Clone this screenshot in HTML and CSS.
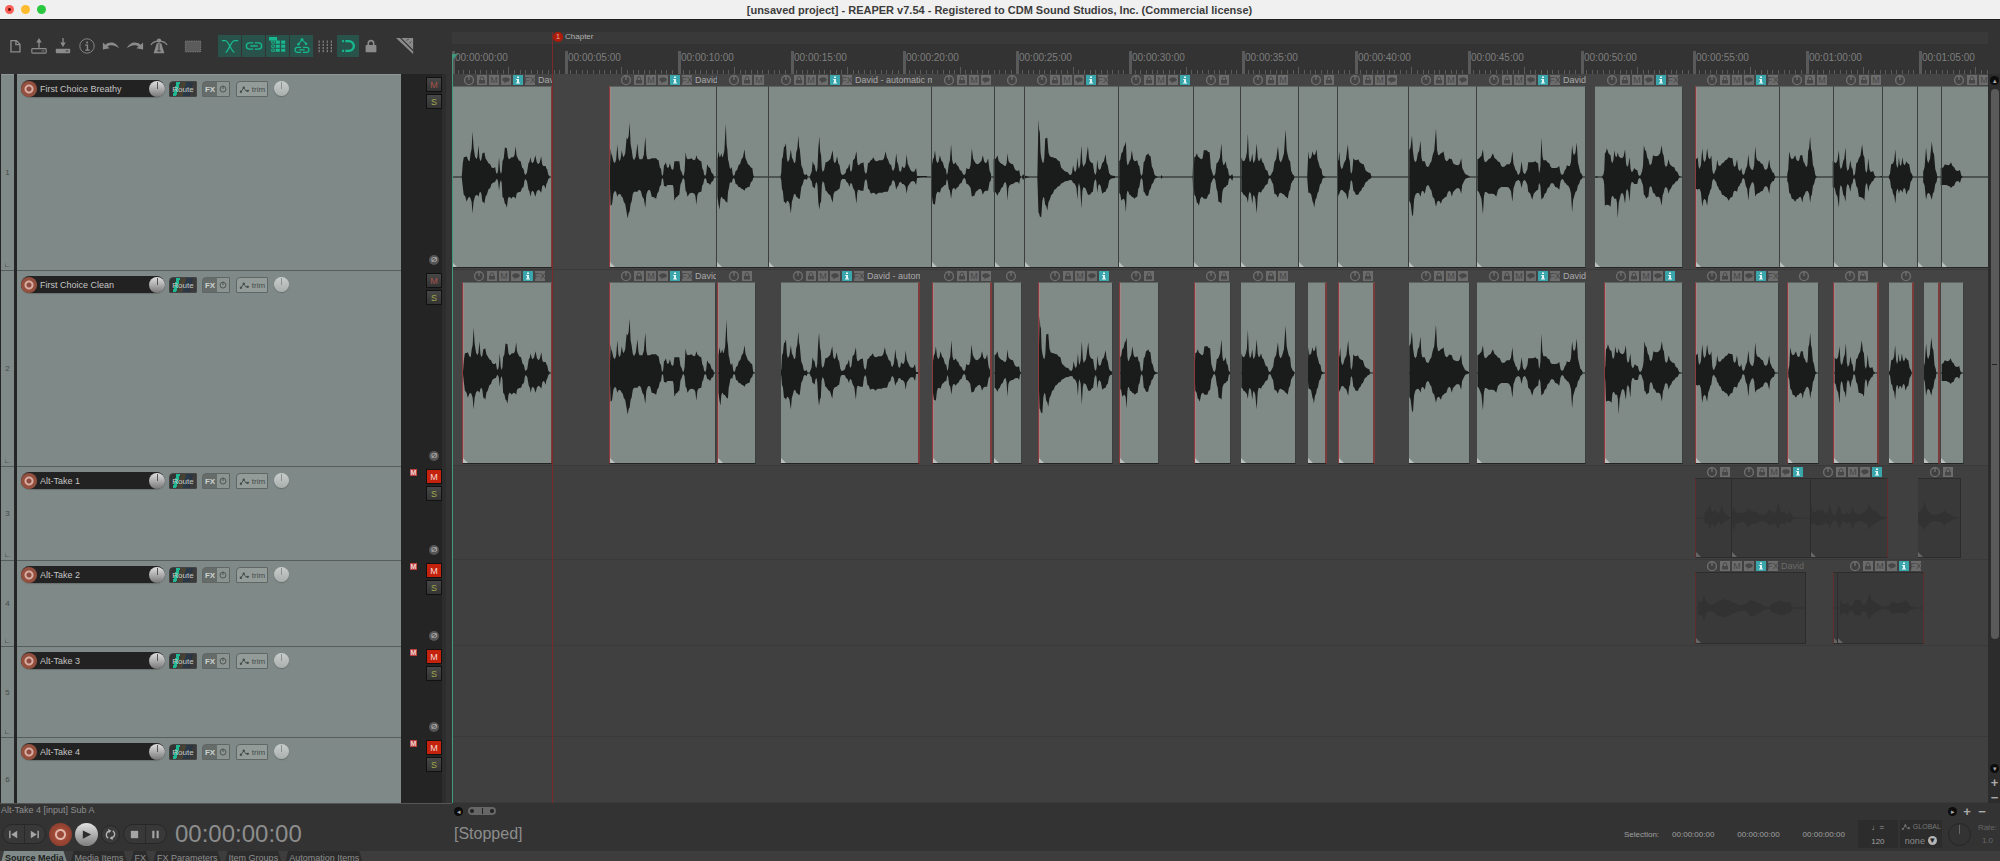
FILE: index.html
```html
<!DOCTYPE html>
<html lang="en">
<head>
  <meta charset="UTF-8" />
  <meta name="viewport" content="width=device-width, initial-scale=1.0" />
  <title>REAPER v7.54</title>
  <link rel="stylesheet" href="styles.css">
</head>
<body>
  <svg class="sprite" aria-hidden="true">
    <symbol id="i-power" viewBox="0 0 12 12"><circle cx="6" cy="6.2" r="4.4" fill="none" stroke="currentColor" stroke-width="1.4"/><path d="M6 1v5" stroke="currentColor" stroke-width="1.4"/></symbol>
    <symbol id="i-lock" viewBox="0 0 10 10"><path d="M2 5h6v3.500h-6z" fill="currentColor"/><path d="M3.300 5V3.500a1.700 1.700 0 0 1 3.400 0V5" fill="none" stroke="currentColor"/></symbol>
    <symbol id="i-note" viewBox="0 0 10 10"><path d="M5 2.200c2.200 0 3.800 1 3.800 2.400S7.200 7 5 7l-1.600 1.500.1-1.700C2 6.400 1.200 5.600 1.200 4.600 1.200 3.200 2.800 2.200 5 2.200z" fill="currentColor"/></symbol>
    <symbol id="i-info" viewBox="0 0 10 10"><path d="M4 1.500h2v1.500H4zM3.200 4H6v3.500h1v1H3v-1h1V5h-.8z" fill="currentColor"/></symbol>
    <symbol id="i-env" viewBox="0 0 12 10"><path d="M2 8l3-5 2.500 3.500L11 6" fill="none" stroke="currentColor"/><circle cx="2" cy="7.500" r="1.300" fill="currentColor"/><circle cx="5.200" cy="3" r="1.300" fill="currentColor"/><circle cx="9.500" cy="6.500" r="1.300" fill="currentColor"/></symbol>
  </svg>

  <div class="app">
    <header class="titlebar">
      <div class="lights">
        <button class="light light-close" aria-label="Close"></button>
        <button class="light light-min" aria-label="Minimize"></button>
        <button class="light light-max" aria-label="Zoom"></button>
      </div>
      <h1>[unsaved project] - REAPER v7.54 - Registered to CDM Sound Studios, Inc. (Commercial license)</h1>
    </header>

    <div class="workspace">
      <section class="left">
        <nav class="toolbar">
          <button aria-label="New project"><svg viewBox="0 0 20 20"><path d="M5.500 4h6l4 4v8.500h-10zM11 4v4.500h4.500" fill="none" stroke="currentColor" stroke-width="1.500"/></svg></button>
          <button aria-label="Open project"><svg viewBox="0 0 20 20"><rect x="2" y="13" width="16" height="5" rx="1" fill="none" stroke="currentColor" stroke-width="1.300"/><path d="M10 12V4" stroke="currentColor" stroke-width="1.500"/><path d="M10 1l3 5h-6z" fill="currentColor"/><path d="M13 15.500h3" stroke="currentColor"/></svg></button>
          <button aria-label="Save project"><svg viewBox="0 0 20 20"><rect x="2" y="13" width="16" height="5" rx="1" fill="currentColor"/><path d="M10 1v6" stroke="currentColor" stroke-width="1.500"/><path d="M10 11l3-5h-6z" fill="currentColor"/><path d="M13 15.500h3" stroke="#333"/></svg></button>
          <button aria-label="Project settings"><svg viewBox="0 0 20 20"><circle cx="10" cy="10" r="8" fill="none" stroke="currentColor"/><path d="M8 9h2.500v5M8 14.500h5" fill="none" stroke="currentColor" stroke-width="1.500"/><circle cx="10.200" cy="6" r="1.100" fill="currentColor"/></svg></button>
          <button aria-label="Undo"><svg viewBox="0 0 20 20"><path d="M1 6v8l7.500-1.500-2.500-2C9 8.500 14 8.500 19 12.500 16 5 8 4.500 3.800 8.500z" fill="currentColor"/></svg></button>
          <button aria-label="Redo"><svg viewBox="0 0 20 20"><path d="M19 6v8l-7.500-1.500 2.500-2C11 8.500 6 8.500 1 12.500 4 5 12 4.500 16.200 8.500z" fill="currentColor"/></svg></button>
          <button aria-label="Metronome"><svg viewBox="0 0 20 20"><path d="M1 9c3-6 15-6 18 0" fill="none" stroke="currentColor" stroke-width="1.300"/><path d="M7.500 7h5l3.500 11H4z" fill="currentColor"/><circle cx="10" cy="4" r="2.400" fill="currentColor"/><path d="M10 8v8M8 15.500h4" stroke="#333"/></svg></button>
          <button class="gap-s" aria-label="Marquee"><svg viewBox="0 0 20 20"><rect x="1.500" y="4.500" width="17" height="12" fill="#5b5b5b" stroke="currentColor" stroke-dasharray="1 1"/></svg></button>
          <div class="toggles">
            <button class="on" aria-label="Auto-crossfade"><svg viewBox="0 0 20 20"><path d="M1 4h4c3 0 7 13 10 13M19 4h-4C11 4 8 17 5 17" fill="none" stroke="currentColor" stroke-width="1.500"/></svg></button>
            <button class="on" aria-label="Item grouping"><svg viewBox="0 0 20 20"><path d="M9 6.500H5a3.500 3.500 0 0 0 0 7h4M11 6.500h4a3.500 3.500 0 0 1 0 7h-4M6 10h8" fill="none" stroke="currentColor" stroke-width="1.500"/></svg></button>
            <button class="on" aria-label="Ripple editing"><svg viewBox="0 0 20 20"><path d="M0 0h9v4h-9z" fill="currentColor"/><path d="M3 4.500h3v2.500H3zM3 9h3v2.500H3zM3 13.500h3V16H3z" fill="none" stroke="currentColor"/><path d="M7.500 4h4.500v3.500H7.500zM13.500 4H18v3.500h-4.500zM7.500 8.500h4.500V12H7.500zM13.500 8.500H18V12h-4.500zM7.500 13h4.500v3.500H7.500zM13.500 13H18v3.500h-4.500z" fill="currentColor"/></svg></button>
            <button class="on" aria-label="Move envelope points"><svg viewBox="0 0 20 20"><path d="M6 8l4-5 4 4" fill="none" stroke="currentColor" stroke-width="1.200"/><circle cx="6" cy="8" r="1.400" fill="currentColor"/><circle cx="10" cy="3" r="1.600" fill="currentColor"/><circle cx="14.500" cy="7.500" r="1.400" fill="currentColor"/><path d="M9 11.500H5a2.500 2.500 0 0 0 0 5.500h4M11 11.500h4a2.500 2.500 0 0 1 0 5.500h-4M7 14.200h6" fill="none" stroke="currentColor" stroke-width="1.400"/></svg></button>
          </div>
          <button aria-label="Grid lines"><svg viewBox="0 0 20 20"><path d="M3.500 4v13M8 4v13M12.500 4v13M17 4v13" stroke="currentColor" stroke-dasharray="2.500 1" stroke-width="1.200"/></svg></button>
          <button class="on" aria-label="Snapping"><svg viewBox="0 0 20 20"><path d="M7 4.500h4a5.500 5.500 0 0 1 0 11H7" fill="none" stroke="currentColor" stroke-width="2.600"/><path d="M3.500 4.500h2M3.500 15.500h2" stroke="currentColor" stroke-width="2.600"/></svg></button>
          <button aria-label="Locking"><svg viewBox="0 0 20 20"><rect x="4" y="9" width="12" height="8" rx="1" fill="currentColor"/><path d="M7 9V7a3 3 0 0 1 6 0v2" fill="none" stroke="currentColor" stroke-width="1.800"/></svg></button>
          <button class="gap-s" aria-label="Scale"><svg viewBox="0 0 20 20"><path d="M0 1h19v18z" fill="currentColor"/><path d="M5 1l14 14" stroke="#333" stroke-width="1.200"/><path d="M12 4l2-2M15 7l2-2" stroke="#333"/></svg></button>
        </nav>
        <div class="tracks" id="tracks"></div>
      </section>

      <section class="arrange">
        <div class="ruler">
          <div class="marker-lane"></div>
          <div class="times" id="times"></div>
        </div>
        <div class="lanes" id="lanes"></div>
        <div class="marker"><b>1</b><span>Chapter</span></div>
        <div class="cursor"></div>
      </section>

      <aside class="vscroll">
        <button class="dot" aria-label="Scroll up">▴</button>
        <div class="vtrack"><div class="vthumb"></div></div>
        <button class="dot" aria-label="Scroll down">▾</button>
        <button class="zoom" aria-label="Zoom in vertically">+</button>
        <button class="zoom" aria-label="Zoom out vertically">−</button>
      </aside>
    </div>

    <div class="statusrow">
      <span class="status">Alt-Take 4 [input] Sub A</span>
      <div class="hscroll">
        <button class="dot" aria-label="Scroll left">◂</button>
        <div class="hthumb"><i></i><s></s><i></i></div>
        <button class="dot push" aria-label="Scroll right">▸</button>
        <button class="zoom" aria-label="Zoom in">+</button>
        <button class="zoom" aria-label="Zoom out">−</button>
      </div>
    </div>

    <footer class="transport">
      <div class="controls">
        <div class="pill">
          <button aria-label="Go to start"><svg viewBox="0 0 12 12"><path d="M2 2v8" stroke="currentColor" stroke-width="1.600"/><path d="M10 2v8L3.500 6z" fill="currentColor"/></svg></button>
          <button aria-label="Go to end"><svg viewBox="0 0 12 12"><path d="M10 2v8" stroke="currentColor" stroke-width="1.600"/><path d="M2 2v8l6.500-4z" fill="currentColor"/></svg></button>
        </div>
        <button class="round rec" aria-label="Record"></button>
        <button class="round play" aria-label="Play"><svg viewBox="0 0 12 12"><path d="M2 1.500v9L11 6z" fill="currentColor"/></svg></button>
        <button class="round loop" aria-label="Repeat"><svg viewBox="0 0 12 12"><path d="M3.500 10A4.300 4.300 0 0 1 4.500 2.200M8.500 2a4.300 4.300 0 0 1-1 7.800" fill="none" stroke="currentColor" stroke-width="1.500"/><path d="M3.500 0l3.500 2-3 2.500zM8.500 12L5 10l3-2.500z" fill="currentColor"/></svg></button>
        <div class="pill">
          <button aria-label="Stop"><svg viewBox="0 0 12 12"><path d="M2 2h8v8H2z" fill="currentColor"/></svg></button>
          <button aria-label="Pause"><svg viewBox="0 0 12 12"><path d="M2.500 2h2.300v8H2.500zM7.200 2h2.300v8H7.200z" fill="currentColor"/></svg></button>
        </div>
        <span class="clock">00:00:00:00</span>
      </div>
      <span class="state">[Stopped]</span>
      <div class="selection">
        <span>Selection:</span><span>00:00:00:00</span><span>00:00:00:00</span><span>00:00:00:00</span>
      </div>
      <div class="box tempo"><span>♩=</span><span>120</span></div>
      <div class="box global">
        <span class="glabel"><svg viewBox="0 0 12 10"><use href="#i-env"/></svg>GLOBAL</span>
        <button>none <i>▾</i></button>
      </div>
      <div class="rateknob"></div>
      <div class="rate"><span>Rate:</span><span>1.0</span></div>
    </footer>

    <nav class="tabs">
      <a href="#" class="tab active">Source Media</a>
      <a href="#" class="tab">Media Items</a>
      <a href="#" class="tab">FX</a>
      <a href="#" class="tab">FX Parameters</a>
      <a href="#" class="tab">Item Groups</a>
      <a href="#" class="tab">Automation Items</a>
    </nav>
  </div>
  <script src="script.js"></script>
</body>
</html>
```
FILE: styles.css
```css
:root {
  --bg: #333333;
  --panel: #7f8987;
  --item: #808b88;
  --wave: #1a1c1b;
  --teal: #3aa5aa;
  --green: #18b78f;
  --icon: #8b8b8b;
  --left: 446px;
  --split: 6px;
}

* {
  box-sizing: border-box;
}

body {
  margin: 0;
  background: var(--bg);
  color: #a0a0a0;
  font-family: "Liberation Sans", Arial, sans-serif;
  font-size: 9px;
}

button {
  padding: 0;
  border: 0;
  background: none;
  color: inherit;
  font: inherit;
}

.sprite {
  display: none;
}

.app {
  display: flex;
  flex-direction: column;
  height: 100vh;
  overflow: hidden;
}

/* title bar */
.titlebar {
  display: flex;
  flex: 0 0 20px;
  align-items: center;
  background: #f0f0f0;
  border-bottom: 1px solid #1c1c1c;
  padding: 0 5px;
}

.titlebar h1 {
  flex: 1;
  margin: 0;
  padding-right: 42px;
  color: #3c3c3c;
  font-size: 11px;
  font-weight: bold;
  line-height: 16px;
  text-align: center;
}

.lights {
  display: flex;
  gap: 7px;
}

.light {
  width: 9px;
  height: 9px;
  border-radius: 50%;
}

.light-close {
  background: radial-gradient(circle, #6d0d0a 1px, #fb5f57 2px);
}

.light-min {
  background: #fdbc2e;
}

.light-max {
  background: #2ac840;
}

/* workspace */
.workspace {
  display: flex;
  flex: 1;
  min-height: 0;
}

.left {
  display: flex;
  flex: 0 0 var(--left);
  flex-direction: column;
  margin-right: var(--split);
}

.toolbar {
  display: flex;
  flex: 0 0 54px;
  align-items: center;
  padding: 0 3px 2px;
  color: var(--icon);
}

.toolbar button {
  display: flex;
  align-items: center;
  justify-content: center;
  width: 24px;
  height: 22px;
}

.toolbar svg {
  width: 18px;
  height: 18px;
}

.toolbar .on {
  width: 22px;
  background: #29534a;
  color: var(--green);
}

.toolbar .gap-s {
  margin-left: 10px;
}

.toggles {
  display: flex;
  gap: 1px;
  margin-left: 13px;
}

.toggles .on {
  width: 23px;
}

/* track control panel */
.tracks {
  display: flex;
  flex: 1;
  flex-direction: column;
  min-height: 0;
  overflow: hidden;
}

.track {
  display: flex;
  flex: none;
  background: #242424;
}

.track:last-child,
.lane:last-child {
  flex: 1;
}

/* the last row runs on below the fold */
.track:last-child {
  min-height: 84px;
}

.strip {
  position: relative;
  display: flex;
  align-items: center;
  justify-content: center;
  width: 13px;
  margin-left: 1px;
  background: var(--panel);
  border-top: 1px solid #565d5b;
  color: #464c4a;
  font-size: 8px;
}

.strip::after {
  content: "";
  position: absolute;
  bottom: 3px;
  left: 4px;
  border: solid transparent;
  border-width: 4px 5px 0 0;
  border-left: 1px solid #5f6664;
  border-bottom: 1px solid #5f6664;
}

.panel {
  display: flex;
  flex: 1;
  align-items: flex-start;
  padding: 5px 4px 0;
  margin-left: 3px;
  background: var(--panel);
  border-top: 1px solid #565d5b;
}

.track:first-child .strip,
.track:first-child .panel {
  border-top-color: #8e9795;
}

.namebox {
  display: flex;
  align-items: center;
  width: 144px;
  height: 17px;
  border-radius: 9px;
  background: #222;
  color: #c4c4c4;
  font-size: 9px;
  box-shadow: 0 1px 1px #6a7270;
}

.namebox input {
  flex: 1;
  min-width: 0;
  height: 15px;
  padding: 0 3px;
  border: 0;
  background: none;
  color: inherit;
  font: inherit;
}

.arm {
  width: 16px;
  height: 16px;
  border-radius: 50%;
  background: radial-gradient(circle, #8d4a3e 2px, #d9aca2 3px, #d9aca2 4px, #94503f 5px);
}

.knob {
  width: 16px;
  height: 16px;
  border-radius: 50%;
  background: linear-gradient(#555, #555) 50% 1px / 1px 7px no-repeat, linear-gradient(#e0e0e0, #777);
}

.knob.pan {
  width: 15px;
  height: 15px;
  margin-top: 1px;
  margin-left: 6px;
  background: linear-gradient(#8b918f, #8b918f) 50% 1px / 1px 7px no-repeat, linear-gradient(#c9cecc, #a9afad);
  box-shadow: 0 1px 1px #666d6b;
}

.chip {
  display: flex;
  align-items: center;
  justify-content: center;
  height: 16px;
  margin-top: 1px;
  border: 1px solid #5f6664;
  border-radius: 4px 1px 1px 1px;
  font-size: 8px;
}

.route {
  width: 28px;
  margin-left: 4px;
  border-color: #444;
  background: linear-gradient(105deg, #333 22%, #20b894 22%, #20b894 34%, #3e3e36 34%, #4d4330 52%, #27394a 56%, #2c3540 78%, #3a3a3a 78%);
  color: #c5cac8;
}

.fx {
  width: 28px;
  margin-left: 5px;
  background: linear-gradient(90deg, #656c6a 54%, #8c9492 54%);
  color: #ced3d1;
  font-weight: bold;
  justify-content: space-around;
}

.fx svg {
  width: 8px;
  height: 8px;
  color: #4c5250;
}

.trim {
  width: 32px;
  margin-left: 6px;
  gap: 2px;
  background: #949c9a;
  color: #454c4a;
}

.trim svg {
  width: 11px;
  height: 9px;
}

.side {
  position: relative;
  display: flex;
  flex: 0 0 45px;
  flex-direction: column;
  align-items: center;
  gap: 2px;
  padding: 3px 0 5px 25px;
  border-right: 4px solid #2d2d2d;
}

.ms {
  flex: none;
  width: 16px;
  height: 15px;
  border: 1px solid #111;
  background: linear-gradient(#474747, #333);
  color: #a9524a;
  font-size: 9px;
}

.ms.solo {
  color: #a1a84a;
}

.ms.muted {
  background: #c4220c;
  color: #f5d7d2;
}

.phase {
  width: 10px;
  height: 10px;
  margin-top: auto;
  border-radius: 50%;
  background: #555;
  color: #bbb;
  font-size: 8px;
  line-height: 10px;
}

.badge {
  position: absolute;
  top: 3px;
  left: 9px;
  width: 7px;
  height: 7px;
  background: #b9403c;
  color: #f0d4d2;
  font-size: 7px;
  font-weight: bold;
  line-height: 7px;
  text-align: center;
}

.track:last-child .phase {
  display: none;
}

/* arrange view */
.arrange {
  position: relative;
  display: flex;
  flex: 1;
  flex-direction: column;
  min-width: 0;
  overflow: hidden;
}

.ruler {
  display: flex;
  flex: 0 0 54px;
  flex-direction: column;
  padding-top: 12px;
}

.marker-lane {
  height: 12px;
  background: #393939;
}

.times {
  position: relative;
  flex: 1;
  overflow: hidden;
}

.tick {
  position: absolute;
  bottom: 0;
  width: 1px;
  height: 4px;
  background: #5a5a5a;
}

.tick.mid {
  height: 7px;
}

.tick.major {
  height: 23px;
  padding-left: 3px;
  color: #7e7e7e;
  font-size: 10px;
  line-height: 13px;
}

.lanes {
  display: flex;
  flex: 1;
  flex-direction: column;
  min-height: 0;
}

.lane {
  position: relative;
  flex: none;
  overflow: hidden;
  background: #404040;
  border-bottom: 1px solid #3a3a3a;
}

.lane.lit {
  background: #444;
}

.item {
  position: absolute;
  top: 0;
  bottom: 1px;
  display: flex;
  flex-direction: column;
}

.item-head {
  display: flex;
  flex: 0 0 12px;
  align-items: center;
  gap: 2px;
  padding-left: 11px;
  overflow: hidden;
  color: #aaa;
  white-space: nowrap;
}

.item-head span {
  margin-left: 1px;
}

.ic {
  display: flex;
  flex: none;
  align-items: center;
  justify-content: center;
  width: 10px;
  height: 10px;
  background: #6c6c6c;
  color: #474747;
  font-size: 9px;
  font-style: normal;
}

.ic svg {
  width: 10px;
  height: 10px;
}

.ic.power {
  width: 12px;
  background: none;
  color: #6e6e6e;
}

.ic.power svg {
  width: 12px;
  height: 12px;
}

.ic.info {
  background: var(--teal);
  color: #e4f5f5;
}

.item-body {
  position: relative;
  flex: 1;
  min-height: 0;
  overflow: hidden;
  background: var(--item);
  border-top: 1px solid #5d6462;
  border-right: 1px solid #3b403f;
  border-bottom: 1px solid #242424;
}

.item-body svg {
  display: block;
  width: 100%;
  height: 100%;
}

.item-body path {
  fill: var(--wave);
}

.item-body::after {
  content: "";
  position: absolute;
  bottom: 0;
  left: 0;
  border: solid transparent;
  border-width: 5px 5px 0 0;
  border-left: 5px solid #b9c0be;
  border-right: 0;
  border-bottom: 0;
}

.fade-in .item-body {
  border-left: 1px solid #8c3a3c;
  box-shadow: inset 1px 0 #a48585;
}

.fade-out .item-body {
  border-right: 2px solid #7c3c3c;
}

.dim .item-body {
  background: #393939;
  border-color: #2c2c2c;
  box-shadow: none;
}

.dim.fade-in .item-body {
  border-left-color: #5e2d2d;
}

.dim.fade-out .item-body {
  border-right: 1px solid #5e2d2d;
}

.dim .item-body path {
  fill: #323232;
}

.dim .item-body::after {
  border-left-color: #666;
}

.dim .item-head {
  color: #6a6a6a;
}

.marker {
  position: absolute;
  top: 12px;
  bottom: 0;
  left: 100px;
  border-left: 1px solid #7b2a28;
  color: #b0b0b0;
  font-size: 8px;
  line-height: 10px;
}

.marker b {
  display: inline-block;
  width: 10px;
  height: 10px;
  border-radius: 50%;
  margin-right: 2px;
  background: #b01a08;
  color: #e5aaa2;
  font-weight: normal;
  text-align: center;
}

.cursor {
  position: absolute;
  top: 34px;
  bottom: 0;
  left: 0;
  border-left: 1px solid #3f9a7f;
}

.cursor::before {
  content: "";
  display: block;
  border-top: 5px solid #3f9a7f;
  border-right: 5px solid transparent;
}

/* scroll bars */
.vscroll {
  display: flex;
  flex: 0 0 12px;
  flex-direction: column;
  align-items: center;
  gap: 4px;
  padding: 56px 0 0 1px;
  background: linear-gradient(var(--bg) 54px, #2c2c2c 54px);
}

.vtrack {
  flex: 1;
  width: 8px;
}

.vthumb {
  height: 82%;
  border-radius: 4px;
  background: linear-gradient(#222, #222) 50% 50% / 5px 1px no-repeat, #5a5a5a;
}

.dot {
  width: 9px;
  height: 9px;
  border-radius: 50%;
  background: #0c0c0c;
  color: #aaa;
  font-size: 7px;
  line-height: 9px;
}

.zoom {
  width: 10px;
  height: 11px;
  color: #aaa;
  font-size: 13px;
  font-weight: bold;
  line-height: 11px;
}

.statusrow {
  display: flex;
  flex: 0 0 17px;
}

.status {
  width: calc(var(--left) + var(--split));
  padding-left: 1px;
  border-top: 1px solid #555;
  color: #8f8f8f;
  line-height: 13px;
}

.hscroll {
  display: flex;
  flex: 1;
  align-items: center;
  gap: 5px;
  padding: 0 13px 1px 2px;
}

.hthumb {
  display: flex;
  align-items: center;
  justify-content: space-between;
  width: 28px;
  height: 8px;
  padding: 0 2px;
  border-radius: 4px;
  background: #666;
}

.hthumb i {
  width: 4px;
  height: 4px;
  border-radius: 50%;
  background: #222;
}

.hthumb s {
  width: 1px;
  height: 6px;
  background: #222;
}

.push {
  margin-left: auto;
}

/* transport */
.transport {
  display: flex;
  flex: 0 0 31px;
  align-items: center;
  min-height: 0;
  padding: 0 3px 3px 0;
  font-size: 8px;
}

.controls {
  display: flex;
  flex: 0 0 calc(var(--left) + var(--split));
  align-items: center;
  gap: 3px;
  padding-left: 2px;
}

.pill {
  display: flex;
  width: 44px;
  height: 20px;
  border: 1px solid #272727;
  border-radius: 10px;
  background: #383838;
}

.pill button {
  flex: 1;
  color: #a5a5a5;
}

.pill button + button {
  border-left: 1px solid #2a2a2a;
}

.pill svg,
.round svg {
  width: 11px;
  height: 11px;
  vertical-align: middle;
}

.round {
  width: 23px;
  height: 23px;
  border-radius: 50%;
}

.rec {
  background: radial-gradient(circle, #9b4a3a 3px, #e0b5a8 4px, #e0b5a8 5px, #a24a38 6px, #7c3527);
}

.play {
  background: linear-gradient(#e2e2e2, #7d7d7d);
  color: #2c2c2c;
}

.loop {
  width: 19px;
  height: 19px;
  border: 1px solid #272727;
  background: #3a3a3a;
  color: #b5b5b5;
}

.clock {
  margin-left: 5px;
  color: #8d8d8d;
  font-size: 24px;
  line-height: 26px;
}

.state {
  flex: 1;
  padding-left: 2px;
  color: #8d8d8d;
  font-size: 16px;
}

.selection {
  display: flex;
  gap: 23px;
  margin-right: 13px;
}

.selection span:first-child {
  margin-right: -10px;
}

.box {
  display: flex;
  flex-direction: column;
  align-items: center;
  justify-content: space-around;
  width: 40px;
  height: 28px;
  background: #2c2c2c;
}

.global {
  width: 42px;
  margin-left: 2px;
}

.glabel {
  display: flex;
  align-items: center;
  gap: 2px;
  color: #777;
  font-size: 7px;
}

.glabel svg {
  width: 10px;
  height: 8px;
}

.global button {
  display: flex;
  align-items: center;
  gap: 3px;
  color: #8a8a8a;
  font-size: 9px;
}

.global i {
  width: 9px;
  height: 9px;
  border-radius: 50%;
  background: #b5b5b5;
  color: #222;
  font-style: normal;
  line-height: 9px;
}

.rateknob {
  width: 23px;
  height: 23px;
  margin: 0 7px 0 6px;
  border: 1px solid #262626;
  border-radius: 50%;
  background: linear-gradient(#666, #666) 50% 1px / 1px 9px no-repeat;
}

.rate {
  display: flex;
  flex-direction: column;
  align-items: center;
  gap: 4px;
  color: #666;
}

/* docker tabs */
.tabs {
  display: flex;
  flex: 0 0 10px;
  align-items: flex-start;
  gap: 1px;
  overflow: hidden;
  background: #3d3d3d;
}

.tab {
  flex: none;
  height: 16px;
  padding: 1px 5px 0;
  background: #2c2c2c;
  clip-path: polygon(4px 0, calc(100% - 5px) 0, 100% 100%, 0 100%);
  color: #8e8e8e;
  line-height: 13px;
  text-decoration: none;
}

.tab.active {
  background: #7f8987;
  color: #1d1f1e;
  font-weight: bold;
}
```
FILE: script.js
```js
const ORIGIN = 452; // timeline zero, items below are stored in window pixels
const SECOND = 22.57; // pixels per second at this zoom

// start, end, number of header icons, fades (l, r), label
const tracks = [
  { name: 'First Choice Breathy', height: 196, lit: true, items: [
    [452, 553, 6, 'r', 'David'], [609, 717, 6, 'l', 'David'], [717, 769, 3], [769, 932, 6, '', 'David - automatic m'],
    [932, 995, 4], [995, 1025, 1], [1025, 1119, 6], [1119, 1194, 5], [1194, 1241, 2], [1241, 1299, 3],
    [1299, 1338, 2], [1338, 1409, 4], [1409, 1477, 4], [1477, 1586, 6, '', 'David'], [1595, 1683, 6],
    [1695, 1780, 6, 'l'], [1780, 1834, 3], [1834, 1883, 3], [1883, 1918, 1], [1918, 1942, 0], [1942, 2400, 3]
  ] },
  { name: 'First Choice Clean', height: 196, lit: true, items: [
    [462, 553, 6, 'lr'], [609, 716, 6, 'l', 'David'], [717, 756, 2, 'l'], [781, 920, 6, 'r', 'David - automatic'],
    [932, 992, 4, 'lr'], [994, 1022, 1], [1038, 1113, 5, 'l'], [1119, 1159, 2, 'l'], [1194, 1231, 2, 'l'],
    [1241, 1296, 3], [1308, 1327, 0, 'r'], [1338, 1375, 2, 'lr'], [1409, 1470, 4], [1477, 1586, 6, '', 'David'],
    [1604, 1683, 5, 'l'], [1695, 1779, 6, 'l'], [1787, 1819, 1, 'l'], [1833, 1879, 2, 'lr'], [1889, 1914, 1, 'r'],
    [1924, 1940, 0, 'r'], [1941, 1964, 0]
  ] },
  { name: 'Alt-Take 1', height: 94, muted: true, items: [
    [1695, 1732, 2, 'l'], [1732, 1811, 5], [1811, 1888, 5, 'r'], [1918, 1961, 2]
  ] },
  { name: 'Alt-Take 2', height: 86, muted: true, items: [
    [1695, 1806, 6, 'l', 'David'], [1833, 1838, 0, 'l'], [1838, 1924, 6, 'r']
  ] },
  { name: 'Alt-Take 3', height: 91, muted: true, items: [] },
  { name: 'Alt-Take 4', height: 66, muted: true, items: [] }
];

// phrases of the take: "x,peak,trough" triples, x counted from timeline zero
const voice = [
  '10,1,1 11,14,10 12,20,18 15,21,25 18,16,20 19,24,22 21,46,37 22,30,25 25,18,18 27,32,20 29,16,15 31,24,25 33,25,27 35.5,17,18 39,13,11 41.5,9,6 44,10,5 46,3,2 48,20,14 50,3,3 51.5,16,20 54,30,27 56,29,31 58,18,20 60.5,20,22 62.6,20,20 65,31,22 66.6,20,16 70,16,15 73,8,10 75,2,2 78,14,13 80,20,20 82,14,14 85,22,20 88,13,13 91,21,16 93,11,8 95.5,11,12 97,8,6 99.5,1,1',
  '157,10,10 157.6,29,29 159,22,28 162,14,14 164.5,33,20 166.5,16,17 169,27,20 171,20,25 174,40,36 175,38,42 177,55,35 179,28,25 181.5,17,15 185,34,15 187,18,13 190,18,20 193,41,31 195,18,15 197,18,13 199.5,19,20 204,19,22 206.5,17,15 209,8,8 210.5,1,1 212,12,9 214,15,10 216,9,8 218,14,8 221,7,8 222.6,16,24 225.5,16,20 227.6,16,18 230,5,5 232,1,1 234,25,14 236,18,20 240,19,16 243,17,17 245,22,28 247,18,16 250,16,15 252,7,7 254,1,1 256,13,6 259,9,8 262,3,4 264,0,0',
  '265.5,18,20 266.6,26,28 267.6,20,33 269.4,24,20 271,20,22 274,54,25 275.5,28,26 277,15,12 279,8,5 280,10,6 282,1,1 284,6,7 287,12,10 290,18,12 293,28,14 295,17,11 298,12,10 301,9,4 303,0,0',
  '328.7,1,1 330,18,12 332,30,25 334,34,27 336,15,24 339,28,37 341,18,22 343,14,17 344.4,25,20 346.6,42,22 348,28,22 351,8,7 353,2,2 355,3,3 357,0,0 359,3,3 361,16,10 363,12,12 365,5,5 366.6,28,25 367.6,41,33 369.4,22,25 371,5,4 374,15,14 376.6,16,17 381,27,26 383,14,15 385.5,21,14 388,12,12 390.5,2,2 393,3,2 395,8,5 398,14,10 399.4,5,6 401.6,17,11 405,26,27 406.6,12,13 409.4,14,14 412,15,14 414.5,3,2 416.6,14,12 419.4,17,17 422,20,16 425,16,18 427.6,17,16 431,17,16 434.4,26,15 436.6,18,15 440,12,8 442,6,3 445,24,13 447,13,9 449,5,5 451,11,7 453.4,9,8 455.5,23,17 457.6,11,8 462,5,4 465,9,8 466,1,1 476,1,0',
  '480,12,20 481,18,27 483,27,28 485.5,14,15 488,22,16 491,15,10 494,8,8 495,2,2 497,13,12 499.4,33,22 501.6,13,11 504,15,13 506.6,11,10 510,6,6 513,2,1 515,9,7 518,8,9 520.5,29,20 523,16,19 526,13,14 529,15,12 531.6,22,18 534.4,14,14 537,19,14 540,3,3',
  '542.6,18,15 545.5,22,19 548,15,15 551,13,10 554,11,5 556,24,24 557.6,15,9 561.6,13,7 566,6,5 568,7,7 570,0,0 572,3,3 574,1,1 581,0,0',
  '585.5,1,1 586.6,58,36 588,45,40 589.4,20,41 591.6,14,20 593.4,39,28 595.5,40,34 598,21,23 601,20,17 604.4,19,12 608,16,9 611,8,6 616,5,4 619.4,2,3 621.6,12,6 624,5,8 626,20,23 627.6,8,6 630,32,32 632,10,10 636.6,31,18 638.7,16,18 641.6,14,15 644.4,2,2 646,18,16 648,7,7 651,14,17 654.4,23,15 656.6,12,11 659.4,2,2 664,1,1',
  '667.3,16,16 669.4,24,24 672,31,22 674,36,36 675.5,12,14 677.6,16,18 680,27,20 682.6,16,22 685.5,17,20 687.6,11,10 690,1,1 692,15,15 694.4,22,19 696.6,24,19 699,21,12 701.6,8,6 704.4,1,1 708.7,0,0 710,2,2 712,0,0',
  '741.6,1,1 742.3,20,18 745,24,26 747,20,29 750,18,20 752,27,22 755,27,22 758,25,17 760.5,5,4 762.6,1,1 765,14,12 767,16,25 770,34,27 772,12,12 774.4,16,10 776.6,8,8 778.7,1,1 781,3,4 782,0,0',
  '789.4,20,15 791.6,16,18 794,20,20 796,44,26 798,15,15 800.5,24,27 802,14,18 805,34,37 807,16,15 809.4,20,16 812,14,12 816,6,7 818,1,1 820.5,4,5 823,15,17 826.6,31,21 829,15,16 831,18,17 834.4,48,20 836.6,22,22 839,16,13 841,4,5 842.6,2,3 844,0,0',
  '855.5,2,2 856.6,26,16 858,18,16 861,26,25 862.6,22,31 865,28,21 867,15,15 870,8,6 872,1,1 877,0,0',
  '886,16,20 887.3,26,17 889.4,8,13 892,14,15 896,33,23 898,16,12 899.4,3,3 901.6,19,14 904,17,18 906.6,18,18 909.4,14,14 912,13,10 916,5,4 918.7,4,2 921,0,0',
  '957.3,27,24 960,42,38 961,26,40 963.4,15,18 966,24,16 968.7,37,20 970.5,16,14 973,16,17 976,10,8 978.4,14,12 981,22,20 984.4,49,30 986.6,22,24 989.4,24,27 992,26,22 995,16,20 998,19,14 1000.5,18,20 1003,13,14 1007,12,11 1010,19,17 1012,7,6 1016,2,1 1022,0,0',
  '1025.5,18,14 1028,20,18 1031,28,38 1033,15,15 1036.6,18,17 1041,24,17 1044.4,18,20 1048,15,11 1051,10,10 1055,13,10 1058,13,12 1060.7,26,25 1063,10,8 1065,6,4 1067,2,3 1070,16,11 1072.7,3,3 1075,6,6 1076.7,15,15 1080.7,15,23 1084,16,15 1086.7,14,13 1088,4,6 1090,40,23 1092,17,21 1094.7,17,16 1098,14,10 1100.7,9,6 1104,9,10 1108,11,13 1110.7,2,2 1113.7,7,6 1115.7,12,8 1118.7,11,12 1121,32,36 1123,22,20 1125.7,35,14 1128,10,7 1130.7,3,2 1132.7,0,0',
  '1143.7,1,1 1148.7,0,0 1151.7,3,3 1153,24,29 1155,29,28 1158.7,22,30 1160.4,14,19 1162.7,27,22 1164.4,20,22 1166,25,42 1168,20,22 1170.4,19,16 1173.4,28,27 1175.4,10,12 1178,20,25 1180,5,5 1182.7,9,7 1185.7,7,7 1188,1,1 1190.7,6,6 1192.4,32,18 1194.7,26,22 1197,18,20 1199,12,9 1201.7,22,16 1204.7,21,20 1207.4,22,20 1210.4,32,29 1212.4,22,16 1214.7,10,10 1217.4,18,17 1219.7,12,12 1223,10,7 1226.4,5,4 1229.7,0,0',
  '1242.7,18,12 1244.7,20,13 1246.7,8,12 1249.4,29,30 1251.7,15,22 1254.4,29,29 1256.7,18,17 1258.7,22,12 1260.7,3,2 1262.7,6,4 1264.7,18,9 1266.7,11,13 1269.7,14,18 1273,17,20 1276.4,20,24 1280.4,19,20 1282.4,10,14 1285,18,15 1287.4,6,9 1289.4,9,6 1291.4,2,1 1294,8,9 1296.7,23,24 1298.7,9,9 1301.4,7,5 1303.7,31,20 1305.7,17,17 1308,16,16 1311.4,13,14 1314.7,7,9 1318,18,17 1320,8,6 1322.7,4,4 1325,0,0',
  '1335.4,3,4 1337.4,26,16 1340,18,22 1343.4,22,25 1346.4,16,22 1348.7,22,20 1350.7,22,26 1353,14,18 1355.4,10,14 1356.7,26,15 1358.7,41,26 1360.4,25,18 1362.7,9,7 1365.4,0,0',
  '1381.7,16,10 1384,14,17 1387,27,31 1388.7,8,8 1391.4,16,18 1393.7,30,25 1395.7,6,7 1398.7,17,15 1401,8,6 1402.4,1,1 1404.7,14,9 1407.4,19,20 1410.7,33,21 1413,20,24 1415,4,6 1417,19,15 1419.4,5,7 1422,6,4 1425,0,0 1431,1,0',
  '1437,1,1 1439.4,13,11 1441.4,14,17 1443.7,28,27 1445.7,9,12 1447.4,20,17 1449,11,13 1451,20,16 1453,12,11 1455,16,18 1458,13,13 1460.7,3,3 1461.7,0,0',
  '1471.4,5,5 1474.4,30,23 1476.7,14,16 1480.4,36,23 1482.7,23,15 1485.4,4,5 1486.7,0,0',
  '1489.7,9,8 1493,13,8 1496.4,12,9 1499,15,11 1502,10,9 1505.4,6,4 1508,7,6 1510.7,0,0'
];

const altOne = [
  '1252,5,5 1255,9,6 1258,13,12 1260,6,6 1263,8,10 1267,5,4 1270,12,8 1275,4,3 1279,1,1',
  '1280,8,8 1282,12,13 1285,5,5 1288,6,5 1292,5,4 1296,10,10 1301,7,6 1305,6,6 1311,3,3 1318,9,8 1323,5,6 1327,17,12 1330,6,5 1333,7,7 1336,3,3 1338,8,6 1345,0,0',
  '1359,14,8 1362,6,5 1365,8,8 1371,8,7 1375,5,5 1378,14,12 1383,2,2 1386,11,8 1388,12,12 1392,3,3 1395,6,6 1398,4,4 1401,11,12 1404,5,5 1408,4,3 1414,7,5 1418,15,12 1422,8,7 1425,7,5 1434,1,1',
  '1466,6,6 1470,10,9 1473,17,12 1476,8,7 1482,3,3 1488,4,4 1493,8,8 1498,4,4 1505,1,1'
];

const altTwo = [
  '1245,8,8 1248,6,7 1251,13,13 1254,6,5 1258,3,3 1265,7,8 1271,9,10 1277,8,8 1283,5,5 1288,3,3 1293,4,3 1298,9,9 1303,7,8 1308,5,5 1316,1,1 1321,5,5 1328,8,7 1333,6,7 1339,6,5 1342,1,1',
  '1388,10,9 1391,4,5 1396,6,7 1399,2,2 1403,8,7 1408,9,8 1412,3,3 1418,15,12 1421,8,7 1425,5,4 1434,1,1 1441,7,6 1447,5,5 1455,8,6 1463,1,1'
];

const waves = [voice, voice, altOne, altTwo];

// pulls the outline in between two readings, so that peaks stay narrow
function between(a, b) {
  return Math.min(a, b) * 0.8 + Math.max(a, b) * 0.2;
}

function wavePath(phrases) {
  const top = ['0,-0.4'];
  const bottom = ['0,0.4'];
  phrases.forEach(phrase => {
    const read = phrase.split(' ').map(p => p.split(',').map(Number));
    const points = [[read[0][0], 0, 0]];
    read.forEach((point, i) => {
      const prev = read[i - 1];
      if (prev && point[0] - prev[0] > 1.2) {
        points.push([(point[0] + prev[0]) / 2, between(point[1], prev[1]), between(point[2], prev[2])]);
      }
      points.push(point);
    });
    points.push([read[read.length - 1][0], 0, 0]);
    points.forEach(([x, up, down]) => {
      top.push(x + ',' + -Math.max(up, 0.4));
      bottom.push(x + ',' + Math.max(down, 0.4));
    });
  });
  top.push('2000,-0.4');
  bottom.push('2000,0.4');
  return 'M' + top.concat(bottom.reverse()).join('L') + 'Z';
}

const headIcons = [
  '<i class="ic power"><svg><use href="#i-power"/></svg></i>',
  '<i class="ic"><svg><use href="#i-lock"/></svg></i>',
  '<i class="ic">M</i>',
  '<i class="ic"><svg><use href="#i-note"/></svg></i>',
  '<i class="ic info"><svg><use href="#i-info"/></svg></i>',
  '<i class="ic">FX</i>'
];

function itemHtml([start, end, icons, fades = '', label = ''], track, path) {
  const classes = ['item'];
  if (fades.includes('l')) classes.push('fade-in');
  if (fades.includes('r')) classes.push('fade-out');
  if (track.muted) classes.push('dim');
  const x = start - ORIGIN;
  const width = end - start;
  const h = track.height - 14;
  return `
    <div class="${classes.join(' ')}" style="left:${x}px;width:${width}px">
      <div class="item-head">${headIcons.slice(0, icons).join('')}${label ? `<span>${label}</span>` : ''}</div>
      <div class="item-body">
        <svg viewBox="${x} ${-h / 2} ${width} ${h}" preserveAspectRatio="none"><path d="${path}"/></svg>
      </div>
    </div>`;
}

function trackHtml(track, i) {
  const last = i === tracks.length - 1;
  return `
    <div class="track" style="${last ? '' : `height:${track.height}px`}">
      <div class="strip">${i + 1}</div>
      <div class="panel">
        <div class="namebox">
          <button class="arm" aria-label="Record arm"></button>
          <input value="${track.name}" aria-label="Track name">
          <div class="knob"></div>
        </div>
        <button class="chip route">Route</button>
        <button class="chip fx">FX <svg><use href="#i-power"/></svg></button>
        <button class="chip trim"><svg><use href="#i-env"/></svg>trim</button>
        <div class="knob pan"></div>
      </div>
      <div class="side">
        ${track.muted ? '<span class="badge">M</span>' : ''}
        <button class="ms ${track.muted ? 'muted' : ''}">M</button>
        <button class="ms solo">S</button>
        <button class="phase">Ø</button>
      </div>
    </div>`;
}

document.getElementById('tracks').innerHTML = tracks.map(trackHtml).join('');

document.getElementById('lanes').innerHTML = tracks.map((track, i) => {
  const path = waves[i] ? wavePath(waves[i]) : '';
  const last = i === tracks.length - 1;
  return `<div class="lane ${track.lit ? 'lit' : ''}" style="${last ? '' : `height:${track.height}px`}">
    ${track.items.map(item => itemHtml(item, track, path)).join('')}
  </div>`;
}).join('');

// ruler: a tick each quarter second, a time each five
let ticks = '';
for (let q = 0; q < 280; q++) {
  const s = q / 4;
  const x = Math.round(s * SECOND);
  if (q % 20 === 0) {
    const min = String(Math.floor(s / 60)).padStart(2, '0');
    const sec = String(s % 60).padStart(2, '0');
    ticks += `<div class="tick major" style="left:${x}px">00:${min}:${sec}:00</div>`;
  } else {
    ticks += `<div class="tick ${q % 10 === 0 ? 'mid' : ''}" style="left:${x}px"></div>`;
  }
}
document.getElementById('times').innerHTML = ticks;
```
